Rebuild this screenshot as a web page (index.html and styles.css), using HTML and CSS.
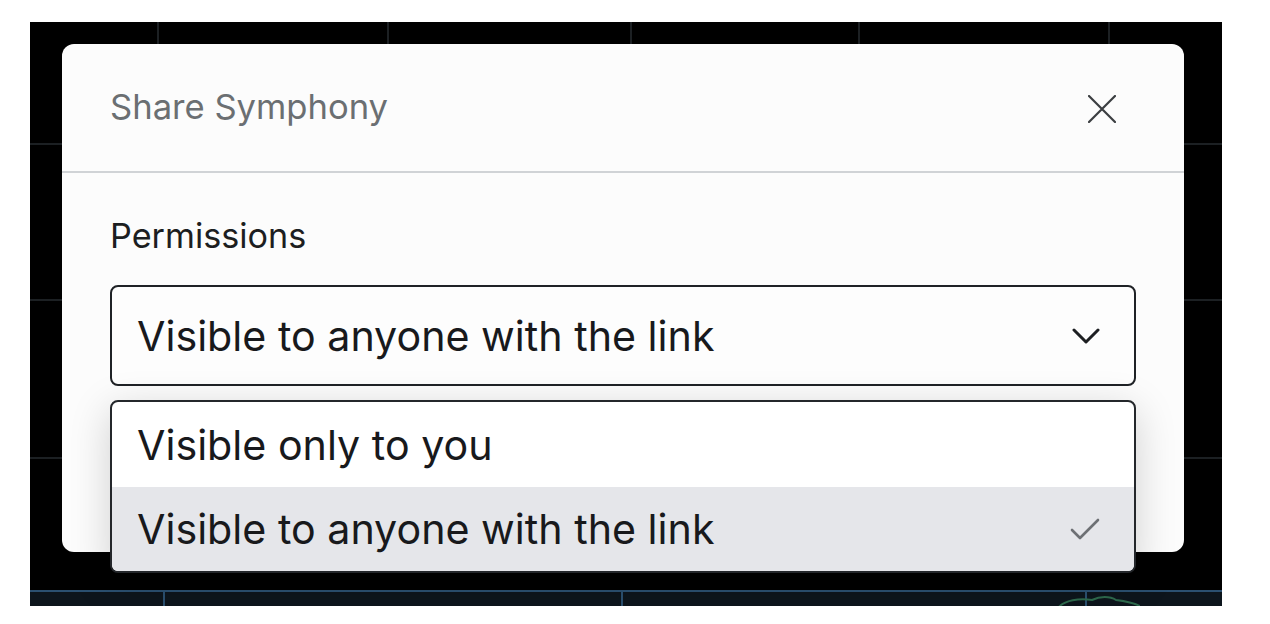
FILE: index.html
```html
<!DOCTYPE html>
<html>
<head>
<meta charset="utf-8">
<link rel="stylesheet" href="styles.css">
</head>
<body>
<div class="canvas">
  <span class="vline" style="left:127px"></span>
  <span class="vline" style="left:357px"></span>
  <span class="vline" style="left:600px"></span>
  <span class="vline" style="left:828px"></span>
  <span class="vline" style="left:1078px"></span>
  <span class="hline" style="top:121px"></span>
  <span class="hline" style="top:277px"></span>
  <span class="hline" style="top:435px"></span>
  <div class="strip">
    <span class="sline" style="left:133px"></span>
    <span class="sline" style="left:591px"></span>
    <span class="sline" style="left:1055px"></span>
    <svg class="curve" width="100" height="16" viewBox="0 0 100 16"><path d="M18 16 C24 8 40 6 52 8 C60 4 70 4 76 8 C84 9 92 10 100 14" fill="none" stroke="#2e6a4d" stroke-width="2"/></svg>
  </div>

  <div class="modal">
    <div class="modal-header">
      <h2 class="modal-title">Share Symphony</h2>
      <svg class="close" width="28" height="28" viewBox="0 0 28 28"><path d="M1 1 L27 27 M27 1 L1 27" stroke="#3b3e41" stroke-width="2.2" stroke-linecap="round"/></svg>
    </div>
    <div class="modal-body">
      <div class="label">Permissions</div>
      <div class="select">
        <span class="select-text">Visible to anyone with the link</span>
        <svg width="28" height="18" viewBox="0 0 28 18"><path d="M2 3 L14 15 L26 3" fill="none" stroke="#1d1f22" stroke-width="3" stroke-linecap="round" stroke-linejoin="round"/></svg>
      </div>
    </div>
  </div>

  <div class="menu">
    <div class="option">Visible only to you</div>
    <div class="option selected">
      <span>Visible to anyone with the link</span>
      <svg width="30" height="24" viewBox="0 0 30 24"><path d="M2 13 L10 21 L28 3" fill="none" stroke="#6d7074" stroke-width="2.6" stroke-linecap="round" stroke-linejoin="round"/></svg>
    </div>
  </div>
</div>
</body>
</html>
```

FILE: styles.css
```css
html, body {
  margin: 0;
  padding: 0;
  background: #ffffff;
}
body {
  font-family: Inter, "Noto Sans", sans-serif;
}
.canvas {
  position: relative;
  margin: 22px 0 0 30px;
  width: 1192px;
  height: 584px;
  background: #000000;
  overflow: hidden;
}
.vline {
  position: absolute;
  top: 0;
  width: 2px;
  height: 30px;
  background: #1c2023;
}
.hline {
  position: absolute;
  left: 0;
  width: 1192px;
  height: 2px;
  background: #1c2023;
}
.strip {
  position: absolute;
  left: 0;
  right: 0;
  bottom: 0;
  height: 14px;
  background: #0d151c;
  border-top: 2px solid #2b5070;
}
.sline {
  position: absolute;
  top: 0;
  width: 2px;
  height: 14px;
  background: #2b5070;
}
.curve {
  position: absolute;
  left: 1010px;
  top: 0;
}
.modal {
  position: absolute;
  left: 32px;
  top: 22px;
  width: 1122px;
  height: 508px;
  background: #fcfcfc;
  border-radius: 12px;
  overflow: hidden;
}
.modal-header {
  display: flex;
  align-items: center;
  justify-content: space-between;
  padding: 0 68px 0 48px;
  box-sizing: border-box;
  height: 129px;
  border-bottom: 2px solid #d0d3d6;
}
.modal-title {
  margin: 0;
  font-size: 34.6px;
  line-height: 41px;
  font-weight: 400;
  color: #6b6f72;
  margin-top: -2px;
}
.close {
  margin-top: 2px;
}
.modal-body {
  padding: 42px 48px 0 48px;
}
.label {
  font-size: 34.2px;
  line-height: 41px;
  color: #1c1e21;
}
.select {
  margin-top: 29px;
  height: 101px;
  box-sizing: border-box;
  border: 2px solid #1f2226;
  border-radius: 8px;
  display: flex;
  align-items: center;
  justify-content: space-between;
  padding: 0 34px 0 25px;
  background: #fdfdfd;
}
.select-text {
  font-size: 41.2px;
  line-height: 50px;
  color: #18191c;
}
.menu {
  position: absolute;
  left: 80px;
  top: 378px;
  width: 1026px;
  height: 173px;
  box-sizing: border-box;
  border: 2px solid #24272b;
  border-radius: 8px;
  background: #ffffff;
  overflow: hidden;
  box-shadow: 0 10px 40px rgba(0, 0, 0, 0.18);
}
.option {
  height: 85px;
  display: flex;
  align-items: center;
  justify-content: space-between;
  padding: 0 34px 0 25px;
  font-size: 41.2px;
  line-height: 50px;
  color: #18191c;
}
.option.selected {
  height: 84px;
  background: #e5e6ea;
}
```
